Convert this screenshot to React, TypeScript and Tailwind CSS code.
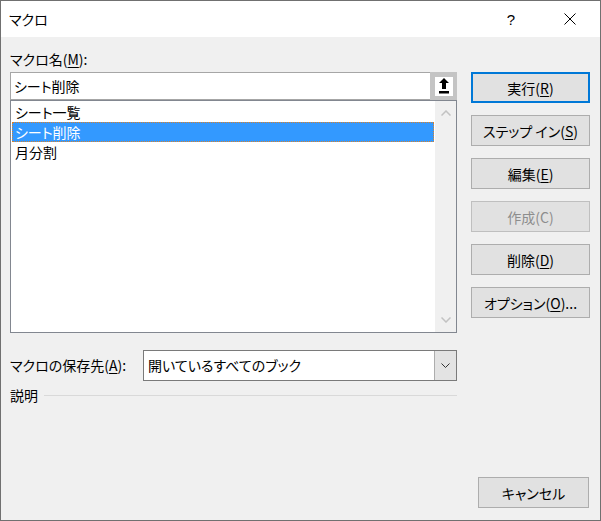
import React from "react";

const U = ({ c }: { c: string }) => <span className="underline underline-offset-[2px]">{c}</span>;

function Btn({ children, def, disabled }: { children: React.ReactNode; def?: boolean; disabled?: boolean }) {
  const cls = def
    ? "border-2 border-[#0078d7] bg-[#e1e1e1] text-black"
    : disabled
    ? "border border-[#bfbfbf] bg-[#e1e1e1] text-[#8d8d8d]"
    : "border border-[#adadad] bg-[#e1e1e1] text-black";
  return (
    <div className={`w-[119px] h-[31px] flex items-center justify-center leading-none ${cls}`}>
      {children}
    </div>
  );
}

export default function App() {
  return (
    <div className="w-[601px] h-[521px] border border-[#707070] bg-[#f0f0f0] flex flex-col text-[14px] text-black font-['Noto_Sans_CJK_JP','Noto_Sans',sans-serif] [font-feature-settings:'palt']">
      {/* title bar */}
      <div className="h-[36px] bg-white flex items-center pl-[8px] shrink-0">
        <span className="leading-none">マクロ</span>
        <span className="ml-auto leading-none text-[15px] font-['Liberation_Sans',sans-serif] mr-[49px]">?</span>
        <svg width="12" height="12" viewBox="0 0 12 12" className="mr-[24px]">
          <path d="M0.5 0.5 L11.5 11.5 M11.5 0.5 L0.5 11.5" stroke="#000" strokeWidth="1" />
        </svg>
      </div>
      {/* body */}
      <div className="flex-1 flex pl-[9px] pr-[10px] pt-[12px] pb-[12px]">
        {/* left column */}
        <div className="w-[447px] flex flex-col">
          <div className="h-[20px] leading-[20px]">
            マクロ名(<U c="M" />):
          </div>
          <div className="mt-[3px] h-[28px] flex">
            <div className="flex-1 bg-white border border-[#a6a6a6] border-r-0 flex items-center pl-[3px]">
              シート削除
            </div>
            <div className="w-[27px] h-[28px] bg-[#c4c4c4] flex items-center justify-center">
              <div className="w-[18px] h-[19px] bg-white flex items-center justify-center">
                <svg width="10" height="16" viewBox="0 0 10 16">
                  <polygon points="5,0 10,5 7,5 7,11 3,11 3,5 0,5" fill="#000" />
                  <rect x="0" y="13" width="10" height="2.5" fill="#000" />
                </svg>
              </div>
            </div>
          </div>
          <div className="h-[233px] border border-[#828790] bg-white flex">
            <div className="flex-1 pt-[1px] px-[1px]">
              <div className="h-[20px] leading-[20px] pl-[3px]">シート一覧</div>
              <div className="h-[20px] leading-[18px] pl-[2px] bg-[#3399ff] text-white border border-dotted border-[#d9822b]">
                シート削除
              </div>
              <div className="h-[20px] leading-[20px] pl-[3px]">月分割</div>
            </div>
            <div className="w-[21px] bg-[#f0f0f0] flex flex-col items-center justify-between pt-[9px] pb-[9px]">
              <svg width="10" height="6" viewBox="0 0 10 6">
                <path d="M0.5 5.5 L5 1 L9.5 5.5" stroke="#c2c2c2" strokeWidth="1.5" fill="none" />
              </svg>
              <svg width="10" height="6" viewBox="0 0 10 6">
                <path d="M0.5 0.5 L5 5 L9.5 0.5" stroke="#c2c2c2" strokeWidth="1.5" fill="none" />
              </svg>
            </div>
          </div>
          <div className="mt-[17px] h-[31px] flex items-center">
            <div className="w-[133px]">
              マクロの保存先(<U c="A" />):
            </div>
            <div className="flex-1 h-[31px] flex border border-[#7a7a7a] bg-white">
              <div className="flex-1 flex items-center pl-[4px]">開いているすべてのブック</div>
              <div className="w-[22px] bg-[#e3e3e3] border-l border-[#adadad] flex items-center justify-center">
                <svg width="9" height="5" viewBox="0 0 9 5">
                  <path d="M0.5 0.5 L4.5 4.5 L8.5 0.5" stroke="#333" strokeWidth="1" fill="none" />
                </svg>
              </div>
            </div>
          </div>
          <div className="mt-[4px] h-[20px] flex items-center">
            <span className="leading-none">説明</span>
            <div className="flex-1 h-px bg-[#d9d9d9] ml-[6px]" />
          </div>
        </div>
        {/* right column */}
        <div className="w-[119px] ml-[14px] flex flex-col pt-[23px]">
          <div className="flex flex-col gap-[12px]">
            <Btn def>
              実行(<U c="R" />)
            </Btn>
            <Btn>
              ステップ イン(<U c="S" />)
            </Btn>
            <Btn>
              編集(<U c="E" />)
            </Btn>
            <Btn disabled>作成(C)</Btn>
            <Btn>
              削除(<U c="D" />)
            </Btn>
            <Btn>
              オプション(<U c="O" />)...
            </Btn>
          </div>
          <div className="mt-auto self-end mr-[1px] w-[111px] h-[31px] border border-[#adadad] bg-[#e1e1e1] flex items-center justify-center leading-none">
            キャンセル
          </div>
        </div>
      </div>
    </div>
  );
}
